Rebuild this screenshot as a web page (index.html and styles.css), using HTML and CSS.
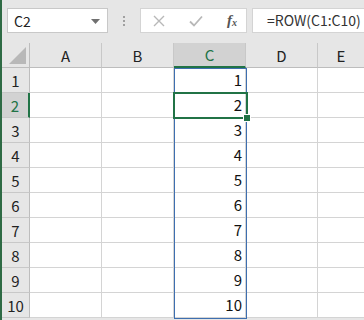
FILE: index.html
```html
<!DOCTYPE html>
<html>
<head>
<meta charset="utf-8">
<link rel="stylesheet" href="styles.css">
</head>
<body>
<div class="app">
  <div class="toolbar">
    <div class="namebox">
      <span class="name">C2</span>
      <svg class="caret" width="9" height="5" viewBox="0 0 9 5"><path d="M0 0H9L4.5 5Z" fill="#707070"/></svg>
    </div>
    <div class="grip"><i></i><i></i><i></i></div>
    <div class="fnbtns">
      <svg class="ico" width="12" height="12" viewBox="0 0 12 12"><path d="M1 1L11 11M11 1L1 11" stroke="#b8b8b8" stroke-width="1.4"/></svg>
      <svg class="ico" width="14" height="12" viewBox="0 0 14 12"><path d="M1 6.5L5 10.5L13 1.5" stroke="#b8b8b8" stroke-width="1.8" fill="none"/></svg>
      <span class="fx">f<sub>x</sub></span>
    </div>
    <div class="formula">=ROW(C1:C10)</div>
  </div>
  <div class="sheet">
    <div class="corner"><span class="tri"></span></div>
    <div class="colhead">A</div>
    <div class="colhead">B</div>
    <div class="colhead sel">C</div>
    <div class="colhead">D</div>
    <div class="colhead last">E</div>

    <div class="rowhead">1</div><div class="cell"></div><div class="cell"></div><div class="cell num">1</div><div class="cell"></div><div class="cell last"></div>
    <div class="rowhead sel">2</div><div class="cell"></div><div class="cell"></div><div class="cell num">2</div><div class="cell"></div><div class="cell last"></div>
    <div class="rowhead">3</div><div class="cell"></div><div class="cell"></div><div class="cell num">3</div><div class="cell"></div><div class="cell last"></div>
    <div class="rowhead">4</div><div class="cell"></div><div class="cell"></div><div class="cell num">4</div><div class="cell"></div><div class="cell last"></div>
    <div class="rowhead">5</div><div class="cell"></div><div class="cell"></div><div class="cell num">5</div><div class="cell"></div><div class="cell last"></div>
    <div class="rowhead">6</div><div class="cell"></div><div class="cell"></div><div class="cell num">6</div><div class="cell"></div><div class="cell last"></div>
    <div class="rowhead">7</div><div class="cell"></div><div class="cell"></div><div class="cell num">7</div><div class="cell"></div><div class="cell last"></div>
    <div class="rowhead">8</div><div class="cell"></div><div class="cell"></div><div class="cell num">8</div><div class="cell"></div><div class="cell last"></div>
    <div class="rowhead">9</div><div class="cell"></div><div class="cell"></div><div class="cell num">9</div><div class="cell"></div><div class="cell last"></div>
    <div class="rowhead">10</div><div class="cell"></div><div class="cell"></div><div class="cell num">10</div><div class="cell"></div><div class="cell last"></div>

    <div class="range"></div>
    <div class="active"><span class="handle"></span></div>
  </div>
</div>
</body>
</html>
```

FILE: styles.css
```css
html, body {
  margin: 0;
  padding: 0;
}
body {
  background: #ffffff;
  font-family: "Noto Sans CJK JP", "Noto Sans", sans-serif;
  color: #000;
}
.app {
  width: 364px;
  height: 320px;
  overflow: hidden;
  border-left: 2px solid #2f6b45;
  box-sizing: border-box;
  background: #e6e6e6;
}
.toolbar {
  height: 43px;
  display: flex;
  align-items: flex-start;
  padding: 8px 0 0 5px;
  box-sizing: border-box;
  background: #e6e6e6;
}
.namebox {
  width: 101px;
  height: 25px;
  box-sizing: border-box;
  background: #fff;
  border: 1px solid #c8c8c8;
  display: flex;
  align-items: center;
  justify-content: space-between;
  padding: 0 7px 0 6px;
}
.name {
  font-size: 14px;
  color: #222;
}
.caret {
  margin-top: 1px;
}
.grip {
  width: 32px;
  height: 25px;
  display: flex;
  flex-direction: column;
  align-items: center;
  justify-content: center;
  gap: 2px;
}
.grip i {
  width: 2px;
  height: 2px;
  background: #a0a0a0;
}
.fnbtns {
  width: 107px;
  height: 25px;
  box-sizing: border-box;
  background: #fff;
  border: 1px solid #d4d4d4;
  display: flex;
  align-items: center;
  padding-left: 12px;
  gap: 24px;
}
.fx {
  font-family: "Liberation Serif", serif;
  font-style: italic;
  font-weight: bold;
  font-size: 15px;
  color: #555;
}
.fx sub {
  font-size: 10px;
  vertical-align: -1px;
}
.formula {
  margin-left: 5px;
  flex: 1;
  height: 25px;
  box-sizing: border-box;
  background: #fff;
  border: 1px solid #d4d4d4;
  border-right: none;
  font-size: 14px;
  color: #333;
  padding-left: 14px;
  line-height: 23px;
}
.sheet {
  position: relative;
  display: grid;
  grid-template-columns: 28px 72px 72px 72px 72px 1fr;
  grid-template-rows: repeat(11, 25px);
  background: #fff;
}
.corner {
  background: #e6e6e6;
  border-right: 1px solid #bdbdbd;
  border-bottom: 1px solid #bdbdbd;
  box-sizing: border-box;
  position: relative;
}
.tri {
  position: absolute;
  right: 3px;
  bottom: 3px;
  width: 0;
  height: 0;
  border-left: 17px solid transparent;
  border-bottom: 17px solid #b8b8b8;
}
.colhead {
  background: #e6e6e6;
  border-right: 1px solid #c8c8c8;
  border-bottom: 1px solid #bdbdbd;
  box-sizing: border-box;
  display: flex;
  align-items: center;
  justify-content: center;
  font-size: 15px;
  color: #222;
}
.colhead.last {
  border-right: none;
}
.colhead.sel {
  background: #d2d2d2;
  color: #217346;
  border-bottom: 2px solid #217346;
}
.rowhead {
  background: #e6e6e6;
  border-right: 1px solid #bdbdbd;
  border-bottom: 1px solid #c8c8c8;
  box-sizing: border-box;
  display: flex;
  align-items: center;
  justify-content: center;
  font-size: 15px;
  color: #222;
}
.rowhead.sel {
  background: #d2d2d2;
  color: #217346;
  border-right: 2px solid #217346;
}
.cell {
  border-right: 1px solid #d4d4d4;
  border-bottom: 1px solid #d4d4d4;
  box-sizing: border-box;
}
.cell.last {
  border-right: none;
}
.num {
  font-size: 15px;
  text-align: right;
  padding-right: 3px;
  line-height: 24px;
  color: #111;
}
.range {
  position: absolute;
  left: 172px;
  top: 25px;
  width: 73px;
  height: 251px;
  box-sizing: border-box;
  border: 1px solid #3e6fb0;
  pointer-events: none;
}
.active {
  position: absolute;
  left: 171px;
  top: 49px;
  width: 75px;
  height: 27px;
  box-sizing: border-box;
  border: 2px solid #217346;
}
.handle {
  position: absolute;
  right: -5px;
  bottom: -5px;
  width: 6px;
  height: 6px;
  background: #217346;
  border: 1px solid #fff;
}
```
